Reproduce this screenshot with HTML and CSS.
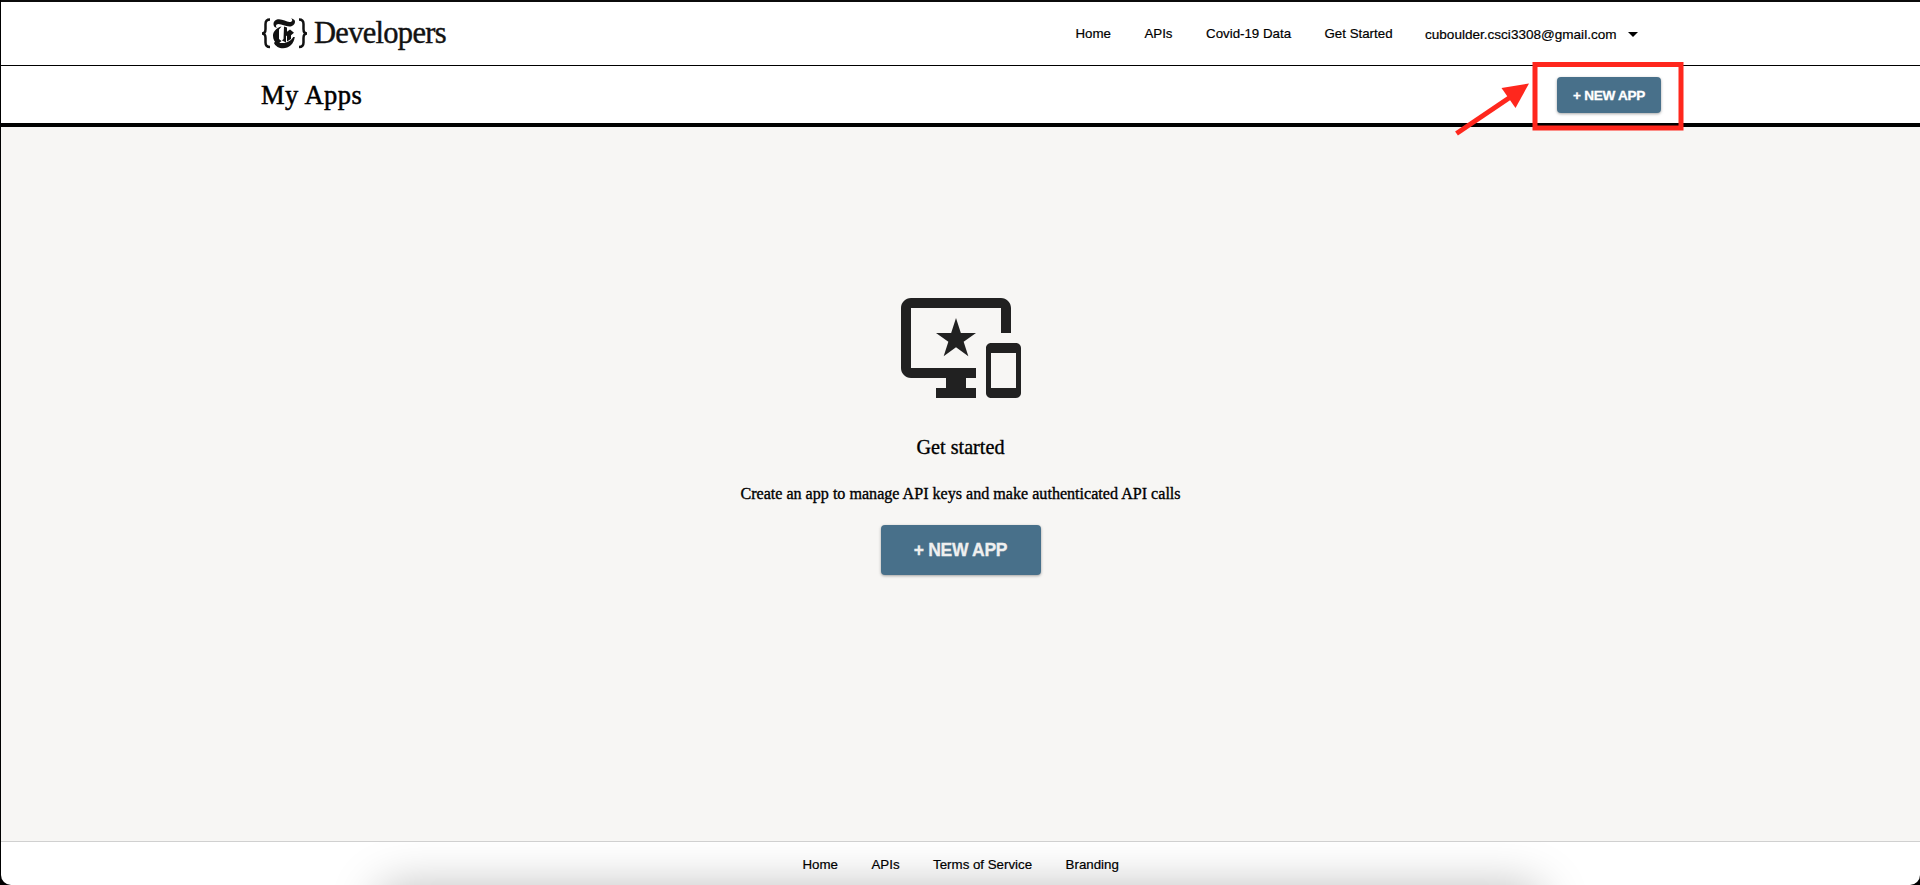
FILE: index.html
```html
<!DOCTYPE html>
<html lang="en">
<head>
<meta charset="utf-8">
<title>My Apps</title>
<link rel="stylesheet" href="styles.css">
</head>
<body>
<div class="window">
  <header class="header">
    <a class="brand">
      <svg class="brand-mark" width="48" height="34" viewBox="0 0 48 34">
        <g fill="none" stroke="#121212" stroke-width="2.500">
          <path d="M10 3.500C7 3.500 5.500 5 5.500 8v5c0 2.500-1 4.500-3.500 4.500 2.500 0 3.500 2 3.500 4.500v4.500c0 3 1.500 4.500 4.500 4.500"/>
          <path d="M39 3.500c3 0 4.500 1.500 4.500 4.500v5c0 2.500 1 4.500 3.500 4.500-2.500 0-3.500 2-3.500 4.500v4.500c0 3-1.500 4.500-4.500 4.500"/>
        </g>
        <g fill="#121212">
          <path d="M35 5.500c0 3.500-3 5-5.500 5-4.500 0-7.500-2.500-11-2.500-1.500 0-2.500.8-2.500 2 0 1 .7 1.500 1.500 1.800-2 .2-4-1.200-4-3.600C13.500 5 16 3.300 19 3.300c4 0 7.500 2.700 10.500 2.700 1.700 0 2.700-.8 2.700-1.800 0-.9-.7-1.400-1.500-1.700 2-.2 4.300 1.300 4.300 3z"/>
          <path d="M21.500 10.500l-2.500 3v9.500l2.500 2-4 3.300c-3-2-4.500-5.300-4.500-8.500 0-4 3.200-8 8.500-9.300z"/>
          <path d="M24 10.500l3 1v4.200l3-2.200 4 3.300-3 2.400v3.800l-4 2.500v-6l-1 .8v6.200l-4-2 1.500-1.500z"/>
          <path d="M15.500 25c2 1.500 4.500 2 7 2 5 0 8.500-2.500 10.800-6h1.500C33.800 28 29 32.300 23 32.300c-4 0-7.500-2-9-5.300z"/>
        </g>
      </svg>
      <span class="brand-name">Developers</span>
    </a>
    <nav class="nav">
      <a>Home</a><a>APIs</a><a>Covid-19 Data</a><a>Get Started</a>
      <a class="account">cuboulder.csci3308@gmail.com<i class="caret"></i></a>
    </nav>
  </header>
  <section class="subheader">
    <h1 class="title">My Apps</h1>
    <button class="btn btn-small">+ NEW APP</button>
  </section>
  <main class="main">
    <svg class="devices" width="120" height="120" viewBox="0 0 24 24" fill="#212121">
      <path d="M23 11.010L18 11c-.55 0-1 .45-1 1v9c0 .55.45 1 1 1h5c.55 0 1-.45 1-1v-9c0-.55-.45-.99-1-.99zM23 20h-5v-7h5v7zM20 2H2C.89 2 0 2.890 0 4v12c0 1.100.89 2 2 2h7v2H7v2h8v-2h-2v-2h2v-2H2V4h18v5h2V4c0-1.110-.9-2-2-2zm-8.030 7L11 6l-.97 3H7l2.470 1.760-.94 2.910 2.470-1.800 2.470 1.800-.94-2.910L15 9h-3.030z"/>
    </svg>
    <h2 class="lead">Get started</h2>
    <p class="copy">Create an app to manage API keys and make authenticated API calls</p>
    <button class="btn btn-large">+ NEW APP</button>
  </main>
  <footer class="footer">
    <a>Home</a><a>APIs</a><a>Terms of Service</a><a>Branding</a>
    <div class="dock-shadow"></div>
  </footer>
</div>
<svg class="annotation" width="240" height="80" viewBox="1450 58 240 80">
  <rect x="1535" y="64.500" width="146" height="63.500" fill="none" stroke="#ff271d" stroke-width="5"/>
  <path d="M1456.500 133.500L1512 96" stroke="#ff271d" stroke-width="5"/>
  <path d="M1529 83.500L1501.500 88L1515.500 108z" fill="#ff271d"/>
</svg>
</body>
</html>
```

FILE: styles.css
```css
* { box-sizing: border-box; }
body {
  margin: 0;
  height: 885px;
  padding-left: 1px;
  overflow: hidden;
  background: #000;
  font-family: "Liberation Sans", Arial, sans-serif;
  color: #000;
}
.window {
  display: flex;
  flex-direction: column;
  height: 885px;
  border-top: 2px solid #0b0b0b;
  border-radius: 0 0 10px 10px;
  overflow: hidden;
  background: #fff;
}
.header {
  display: flex;
  justify-content: space-between;
  align-items: center;
  height: 64px;
  padding: 0 282px 0 259px;
  border-bottom: 1px solid #000;
}
.brand { display: flex; align-items: center; }
.brand-mark { flex: none; margin-top: -1px; }
.brand-name {
  margin-left: 6px;
  font: 30.500px "Liberation Serif", serif;
  letter-spacing: -.7px;
  color: #121212;
  -webkit-text-stroke: 0.4px #121212;
}
.nav { display: flex; align-items: center; gap: 33.500px; font-size: 13.300px; }
.nav a { white-space: nowrap; -webkit-text-stroke: 0.2px #000; }
.account { display: flex; align-items: center; font-size: 13.550px; }
.nav .account { padding-top: 1px; margin-left: -1px; }
.caret {
  margin-left: 11.500px;
  border: 5px solid transparent;
  border-top-color: #000;
  border-bottom: 0;
}
.subheader {
  display: flex;
  justify-content: space-between;
  align-items: center;
  height: 61px;
  padding: 0 259px 0 260px;
  border-bottom: 4px solid #000;
}
.title {
  margin: 2px 0 0;
  font: 26.500px "Liberation Serif", serif;
  letter-spacing: .5px;
  -webkit-text-stroke: 0.5px #000;
}
.btn {
  border: 0;
  padding: 1px 0 0;
  border-radius: 4px;
  background: #48708a;
  color: #fff;
  font-family: "Liberation Sans", Arial, sans-serif;
  font-weight: 700;
  box-shadow: 0 1px 3px rgba(0, 0, 0, .35);
  -webkit-text-stroke: 0.3px currentColor;
}
.btn-small { width: 104px; height: 36px; font-size: 13.600px; letter-spacing: -.3px; }
.btn-large { width: 160px; height: 50px; font-size: 17.500px; letter-spacing: -.3px; color: #efefef; }
.main {
  flex: 1;
  display: flex;
  flex-direction: column;
  align-items: center;
  padding-top: 161px;
  background: #f7f6f4;
}
.lead {
  margin: 27px 0 0;
  font: 20.200px/24px "Liberation Serif", serif;
  -webkit-text-stroke: 0.35px #000;
}
.copy {
  margin: 25px 0 21px;
  font: 16.100px/20px "Liberation Serif", serif;
  -webkit-text-stroke: 0.35px #000;
}
.footer {
  position: relative;
  display: flex;
  gap: 33.500px;
  height: 44px;
  padding: 15px 0 0 801.500px;
  border-top: 1px solid #d0d0d0;
  font-size: 13.300px;
  overflow: hidden;
}
.footer a { -webkit-text-stroke: 0.2px #000; }
.dock-shadow {
  position: absolute;
  left: 377px;
  top: 44px;
  width: 1164px;
  height: 60px;
  border-radius: 20px;
  box-shadow: 0 0 48px rgba(0, 0, 0, .26);
}
.annotation { position: absolute; left: 1450px; top: 58px; }
```
